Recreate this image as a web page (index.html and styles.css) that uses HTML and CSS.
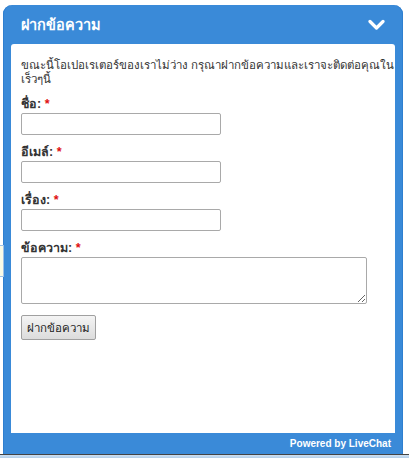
FILE: index.html
```html
<!DOCTYPE html>
<html lang="th">
<head>
<meta charset="utf-8">
<link rel="stylesheet" href="styles.css">
</head>
<body>
<div class="page">
  <div class="backdrop">
    <div class="bg-box"></div>
  </div>
  <div class="widget">
    <div class="header">
      <span class="title">ฝากข้อความ</span>
      <svg class="chevron" width="17" height="12" viewBox="0 0 17 12"><path d="M2 2.5 L8.5 9 L15 2.5" fill="none" stroke="#fff" stroke-width="3.2" stroke-linecap="round" stroke-linejoin="round"/></svg>
    </div>
    <div class="panel">
      <p class="intro"><span class="nowrap">ขณะนี้โอเปอเรเตอร์ของเราไม่ว่าง กรุณาฝากข้อความและเราจะติดต่อคุณใน</span> เร็วๆนี้</p>
      <div class="field">
        <label class="label">ชื่อ: <span class="req">*</span></label>
        <input class="input" type="text">
      </div>
      <div class="field">
        <label class="label">อีเมล์: <span class="req">*</span></label>
        <input class="input" type="text">
      </div>
      <div class="field">
        <label class="label">เรื่อง: <span class="req">*</span></label>
        <input class="input" type="text">
      </div>
      <div class="field">
        <label class="label">ข้อความ: <span class="req">*</span></label>
        <textarea class="textarea"></textarea>
      </div>
      <button class="btn" type="button">ฝากข้อความ</button>
    </div>
    <div class="footer">Powered by LiveChat</div>
  </div>
  <div class="taskbar"></div>
</div>
</body>
</html>
```
FILE: styles.css
```css
html, body {
  margin: 0;
  padding: 0;
  background: #fff;
}
body {
  width: 409px;
  height: 458px;
  overflow: hidden;
  font-family: Tahoma, "Liberation Sans", sans-serif;
}
.page {
  position: relative;
  width: 409px;
  height: 458px;
  padding-top: 5px;
  box-sizing: border-box;
}
.backdrop {
  position: absolute;
  left: 0;
  top: 0;
  width: 3px;
  height: 458px;
}
.bg-box {
  position: absolute;
  left: -10px;
  top: 245px;
  width: 12px;
  height: 30px;
  background: #fafae6;
  border: 1px solid #9cc0e8;
}
.widget {
  margin-left: 3px;
  width: 400px;
  height: 449px;
  background: #3a8ad8;
  border-radius: 9px 9px 0 0;
  display: flex;
  flex-direction: column;
  box-shadow: inset 1px 0 0 #2f7fcf, inset -1px 0 0 #2f7fcf;
}
.header {
  height: 39px;
  flex: none;
  display: flex;
  align-items: center;
  justify-content: space-between;
  padding: 0 18px 0 18px;
}
.title {
  color: #fff;
  font-weight: bold;
  font-size: 14.5px;
}
.chevron {
  display: block;
}
.panel {
  flex: 1;
  margin: 0 8px;
  background: #fff;
  border-radius: 3px 3px 0 0;
  padding: 14px 4px 0 10px;
  color: #333;
  font-size: 11.5px;
}
.intro {
  margin: 0 0 9px 0;
  line-height: 14px;
}
.nowrap {
  white-space: nowrap;
}
.field {
  display: flex;
  flex-direction: column;
  align-items: flex-start;
  margin-bottom: 8px;
}
.label {
  font-weight: bold;
  font-size: 12.5px;
  line-height: 18px;
  color: #333;
}
.req {
  color: #e01010;
}
.input {
  width: 200px;
  height: 22px;
  box-sizing: border-box;
  border: 1px solid #a9a9a9;
  border-radius: 2px;
  margin: 0;
  padding: 2px;
}
.textarea {
  width: 346px;
  height: 47px;
  box-sizing: border-box;
  border: 1px solid #a9a9a9;
  border-radius: 2px;
  margin: 0;
  padding: 2px;
  resize: both;
  display: block;
}
.btn {
  margin-top: 3px;
  height: 25px;
  padding: 0 5px;
  font-family: Tahoma, "Liberation Sans", sans-serif;
  font-size: 11.5px;
  color: #222;
  border: 1px solid #a0a0a0;
  border-radius: 2px;
  background: linear-gradient(#f4f4f4, #dcdcdc);
}
.footer {
  height: 21px;
  flex: none;
  display: flex;
  align-items: center;
  justify-content: flex-end;
  padding-right: 12px;
  color: #fff;
  font-weight: bold;
  font-size: 10px;
}
.taskbar {
  height: 4px;
  border-top: 1px solid #444;
  background: linear-gradient(#cfe0f0, #a9c8e6);
}
```
